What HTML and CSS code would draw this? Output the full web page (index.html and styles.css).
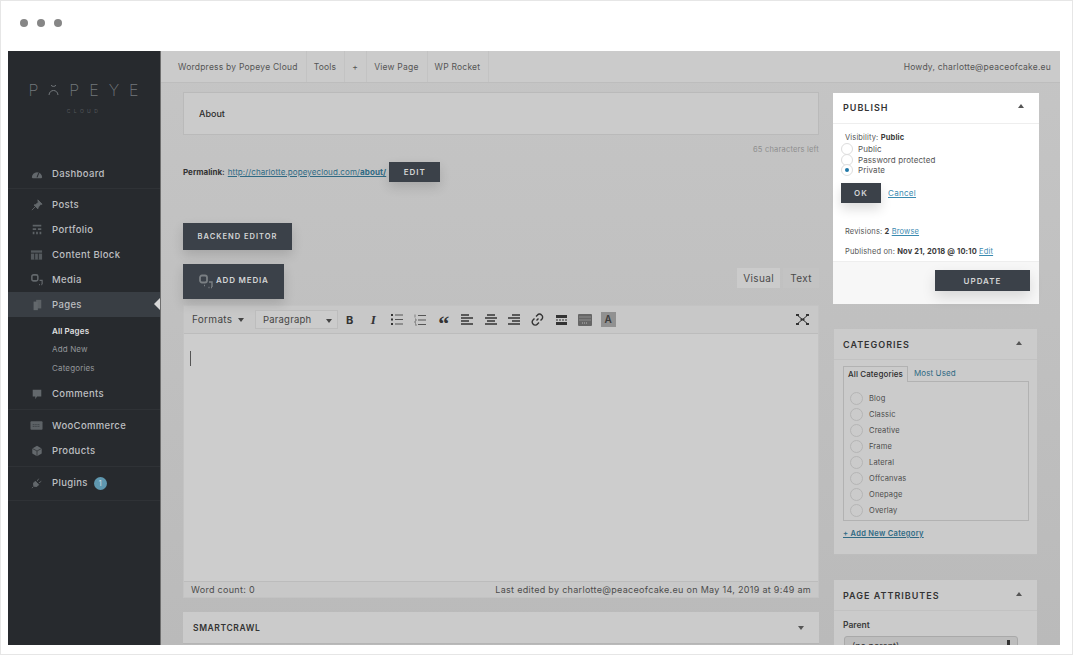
FILE: index.html
```html
<!DOCTYPE html>
<html lang="en">
<head>
    <meta charset="UTF-8">
    <meta name="viewport" content="width=device-width, initial-scale=1">
    <title>Edit Page</title>
    <link rel="stylesheet" href="styles.css">
</head>
<body>
<div class="frame">
    <div class="dots"><i></i><i></i><i></i></div>
    <div class="app">
        <aside class="sidebar">
            <div class="logo">
                <div class="logo-name">
                    <span>P</span>
                    <svg class="logo-o" width="11" height="12" viewBox="0 0 11 12"><path d="M3 1.200c1 1.600 4 1.600 5 0M1 11c.4-6 8.600-6 9 0" fill="none" stroke="#73787c" stroke-width="1"/></svg>
                    <span>P</span><span>E</span><span>Y</span><span>E</span>
                </div>
                <div class="logo-sub">CLOUD</div>
            </div>
            <nav class="menu">
                <div class="menu-group">
                    <a class="menu-item"><svg class="menu-icon" viewBox="0 0 14 14"><path d="M1 11a6 6 0 1 1 12 0l-1 1H2z" fill="#63686c"/><path d="M7 11l2-5" stroke="#272a2e" stroke-width="1.200"/></svg>Dashboard</a>
                </div>
                <div class="menu-group">
                    <a class="menu-item"><svg class="menu-icon" viewBox="0 0 14 14"><path d="M8 1l5 5-2 .5-2.500 3-.5 2L3.500 7l2-.5 3-2.500zM5 9l-4 4" fill="#63686c" stroke="#63686c"/></svg>Posts</a>
                    <a class="menu-item"><svg class="menu-icon" viewBox="0 0 14 14"><path d="M2 1h10v2H2zM2 5h4v2H2zM8 5h4v2H8zM2 9h2v3H2zM6 9h2v3H6zM10 9h2v3h-2z" fill="#5d6266"/></svg>Portfolio</a>
                    <a class="menu-item"><svg class="menu-icon menu-icon-wide" viewBox="0 0 14 12"><path d="M1 1h12v10H1z" fill="#54595d"/><path d="M1 4h12M5 4v7M9 4v7" stroke="#272a2e"/></svg>Content Block</a>
                    <a class="menu-item"><svg class="menu-icon" viewBox="0 0 14 14"><rect x="1" y="1" width="7" height="7" rx="2" fill="none" stroke="#63686c" stroke-width="1.800"/><path d="M10 7.500h3V12M9.500 12.500h1M12 12.500h1" fill="none" stroke="#63686c" stroke-width="1.400"/></svg>Media</a>
                    <a class="menu-item menu-item-active"><svg class="menu-icon" viewBox="0 0 14 14"><path d="M6 1h6v10H6z" fill="#5d6266"/><path d="M3 3h5v10H3z" fill="#63686c"/></svg>Pages</a>
                    <div class="submenu">
                        <a class="submenu-current">All Pages</a>
                        <a>Add New</a>
                        <a>Categories</a>
                    </div>
                    <a class="menu-item"><svg class="menu-icon" viewBox="0 0 14 14"><path d="M2 2h10v8H7l-2 3v-3H2z" fill="#63686c"/></svg>Comments</a>
                </div>
                <div class="menu-group">
                    <a class="menu-item"><svg class="menu-icon menu-icon-wide" viewBox="0 0 14 12"><rect x=".5" y="1" width="13" height="9" rx="1" fill="#5d6266"/><path d="M3 4.500h8M3 6.500h8" stroke="#33373b" stroke-dasharray="1 1"/></svg>WooCommerce</a>
                    <a class="menu-item"><svg class="menu-icon" viewBox="0 0 14 14"><path d="M7 1l5.500 3v6L7 13l-5.500-3V4z" fill="#63686c"/><path d="M1.500 4L7 7l5.500-3M7 7v6" stroke="#272a2e" stroke-width=".8" fill="none"/></svg>Products</a>
                </div>
                <div class="menu-group menu-group-last">
                    <a class="menu-item"><svg class="menu-icon" viewBox="0 0 14 14"><path d="M5 5l4 4-2 2H4l-1-1V7zM7 5l2-3M9 7l3-2M3 11l-2 2" fill="#63686c" stroke="#63686c"/></svg>Plugins<span class="badge">1</span></a>
                </div>
            </nav>
        </aside>
        <div class="workspace">
            <header class="topbar">
                <nav class="topbar-links">
                    <a>Wordpress by Popeye Cloud</a>
                    <a>Tools</a>
                    <a>+</a>
                    <a>View Page</a>
                    <a>WP Rocket</a>
                </nav>
                <div class="howdy">Howdy, charlotte@peaceofcake.eu</div>
            </header>
            <div class="columns">
                <main class="main">
                    <div class="title-box">About</div>
                    <div class="chars-left">65 characters left</div>
                    <div class="permalink">
                        <b>Permalink:</b>
                        <a class="link">http://charlotte.popeyecloud.com/<b>about/</b></a>
                        <button class="btn btn-edit">EDIT</button>
                    </div>
                    <button class="btn btn-backend">BACKEND EDITOR</button>
                    <div class="media-row">
                        <button class="btn btn-media">
                            <svg width="14" height="15" viewBox="0 0 14 15"><rect x="1" y="1.500" width="7" height="7" rx="2" fill="none" stroke="#7a7f83" stroke-width="1.800"/><path d="M10 8h3v5M9.500 13.500h1M12 13.500h1M5 11.500h1" fill="none" stroke="#7a7f83" stroke-width="1.400"/></svg>
                            <span class="btn-media-label">ADD MEDIA</span>
                        </button>
                        <div class="mode-tabs">
                            <span class="mode-tab mode-tab-on">Visual</span>
                            <span class="mode-tab">Text</span>
                        </div>
                    </div>
                    <section class="editor">
                        <div class="toolbar">
                            <span class="formats">Formats<i class="caret"></i></span>
                            <span class="para-select">Paragraph<i class="caret"></i></span>
                            <div class="tools">
                                <span class="tool tool-b">B</span>
                                <span class="tool tool-i">I</span>
                                <span class="tool"><svg width="12" height="11" viewBox="0 0 12 11"><path d="M0 1h2M0 5.500h2M0 10h2" stroke="#333" stroke-width="2"/><path d="M4 1h8M4 5.500h8M4 10h8" stroke="#555" stroke-width="1"/></svg></span>
                                <span class="tool"><svg width="12" height="12" viewBox="0 0 12 12"><path d="M1 .5v3M1 5h1v2H1v2h1M1 10h1v2" stroke="#777" stroke-width=".9" fill="none"/><path d="M4 1.500h8M4 6h8M4 10.500h8" stroke="#555" stroke-width="1"/></svg></span>
                                <span class="tool tool-quote">&#8220;</span>
                                <span class="tool"><svg width="12" height="11" viewBox="0 0 12 11"><path d="M0 1h8M0 4h12M0 7h8M0 10h12" stroke="#333" stroke-width="1.300"/></svg></span>
                                <span class="tool"><svg width="12" height="11" viewBox="0 0 12 11"><path d="M2 1h8M0 4h12M2 7h8M0 10h12" stroke="#333" stroke-width="1.300"/></svg></span>
                                <span class="tool"><svg width="12" height="11" viewBox="0 0 12 11"><path d="M4 1h8M0 4h12M4 7h8M0 10h12" stroke="#333" stroke-width="1.300"/></svg></span>
                                <span class="tool"><svg width="13" height="13" viewBox="0 0 13 13"><path d="M5.500 7.500l2-2M5 3.500l1.500-1.500a2.500 2.500 0 0 1 4 0 2.800 2.800 0 0 1 .5 4L9.500 7.500M8 9.500L6.500 11a2.800 2.800 0 0 1-4.500 0 2.800 2.800 0 0 1 0-4L3.500 5.500" fill="none" stroke="#333" stroke-width="1.400"/></svg></span>
                                <span class="tool"><svg width="11" height="10" viewBox="0 0 11 10"><path d="M0 0h11v3H0zM0 7h11v3H0z" fill="#333"/><path d="M0 5h11" stroke="#333" stroke-dasharray="2 1"/></svg></span>
                                <span class="tool"><svg width="14" height="12" viewBox="0 0 14 12"><rect width="14" height="12" rx="1" fill="#666"/><path d="M1.500 3h11M1.500 6h11M4 9h6" stroke="#b5b5b5" stroke-dasharray="1 1"/></svg></span>
                                <span class="tool"><span class="tool-a">A</span></span>
                            </div>
                            <svg class="tool-full" width="13" height="11" viewBox="0 0 13 11"><path d="M1 1l11 9M12 1L1 10" stroke="#333"/><path d="M0 0h3v2H0zM10 0h3v2h-3zM0 9h3v2H0zM10 9h3v2h-3zM4.500 4.500h4v2h-4z" fill="#333"/></svg>
                        </div>
                        <div class="editor-body"><i class="cursor"></i></div>
                        <div class="statusbar">
                            <span>Word count: 0</span>
                            <span>Last edited by charlotte@peaceofcake.eu on May 14, 2019 at 9:49 am</span>
                        </div>
                    </section>
                    <section class="panel panel-wide">
                        <h2>SMARTCRAWL</h2>
                        <i class="arrow-down"></i>
                    </section>
                </main>
                <aside class="side">
                    <section class="box box-publish">
                        <div class="box-head">
                            <h2>PUBLISH</h2>
                            <i class="arrow-up"></i>
                        </div>
                        <div class="publish-body">
                            <div class="visibility">Visibility: <b>Public</b></div>
                            <label class="radio"><i></i>Public</label>
                            <label class="radio"><i></i>Password protected</label>
                            <label class="radio radio-on"><i></i>Private</label>
                            <div class="ok-row">
                                <button class="btn btn-ok">OK</button>
                                <a class="link">Cancel</a>
                            </div>
                            <div class="meta meta-revisions">Revisions: <b>2</b> <a class="link">Browse</a></div>
                            <div class="meta meta-published">Published on: <b>Nov 21, 2018 @ 10:10</b> <a class="link">Edit</a></div>
                        </div>
                        <div class="publish-foot">
                            <button class="btn btn-update">UPDATE</button>
                        </div>
                    </section>
                    <section class="box box-cats">
                        <div class="box-head">
                            <h2>CATEGORIES</h2>
                            <i class="arrow-up"></i>
                        </div>
                        <div class="cats-body">
                            <div class="cat-tabs">
                                <span class="cat-tab cat-tab-on">All Categories</span>
                                <span class="cat-tab">Most Used</span>
                            </div>
                            <div class="cat-list">
                                <label class="cat"><i></i>Blog</label>
                                <label class="cat"><i></i>Classic</label>
                                <label class="cat"><i></i>Creative</label>
                                <label class="cat"><i></i>Frame</label>
                                <label class="cat"><i></i>Lateral</label>
                                <label class="cat"><i></i>Offcanvas</label>
                                <label class="cat"><i></i>Onepage</label>
                                <label class="cat"><i></i>Overlay</label>
                                <label class="cat"><i></i></label>
                            </div>
                            <a class="add-cat">+ Add New Category</a>
                        </div>
                    </section>
                    <section class="box box-attrs">
                        <div class="box-head">
                            <h2>PAGE ATTRIBUTES</h2>
                            <i class="arrow-up"></i>
                        </div>
                        <div class="attrs-body">
                            <div class="attrs-label">Parent</div>
                            <div class="attrs-select">(no parent)<i></i></div>
                        </div>
                    </section>
                </aside>
            </div>
        </div>
    </div>
</div>
</body>
</html>
```

FILE: styles.css
```css
* {
    margin: 0;
    padding: 0;
    box-sizing: border-box;
}

html,
body {
    width: 100%;
    height: 100%;
    overflow: hidden;
    background: #ffffff;
}

body {
    font-family: "Inter", "Liberation Sans", sans-serif;
    color: #333333;
}

i {
    font-style: normal;
    display: block;
}

button {
    font-family: inherit;
    border: 0;
}

.frame {
    width: 1073px;
    height: 655px;
    border: 1px solid #e6e6e6;
    background: #ffffff;
}

.dots {
    height: 50px;
    padding: 18px 0 0 19px;
    display: flex;
    gap: 9px;
}

.dots i {
    width: 8px;
    height: 8px;
    border-radius: 50%;
    background: #868686;
}

.app {
    width: 1052px;
    height: 594px;
    margin-left: 7px;
    display: flex;
    overflow: hidden;
    background: linear-gradient(#c5c5c5, #bababa);
}

/* sidebar */
.sidebar {
    width: 153px;
    flex: none;
    background: #272a2e;
    border-right: 1px solid #6e6e6e;
}

.logo {
    height: 107px;
    padding-top: 32px;
    color: #73787c;
}

.logo-name {
    display: flex;
    justify-content: center;
    align-items: center;
    gap: 10px;
    font-size: 16px;
    font-weight: 200;
    height: 14px;
    padding-right: 1px;
}

.logo-o {
    margin: 0;
}

.logo-sub {
    margin-top: 11px;
    text-align: center;
    font-size: 5px;
    letter-spacing: 3.400px;
    color: #55595d;
}

.menu-group {
    padding: 3px 0;
    border-bottom: 1px solid #2f3236;
}

.menu-group:first-child {
    padding-bottom: 2px;
}

.menu-group-last {
    padding-bottom: 5px;
}

.menu-item {
    height: 25px;
    display: flex;
    align-items: center;
    padding-left: 23px;
    font-size: 9.500px;
    font-weight: 500;
    letter-spacing: .35px;
    color: #bdbfc1;
    position: relative;
}

.menu-icon {
    width: 12px;
    height: 12px;
    margin-right: 9px;
    flex: none;
}

.menu-icon-wide {
    width: 13px;
    margin-left: -1px;
    margin-right: 9px;
}

.menu-item-active {
    background: #393e44;
}

.menu-item-active::after {
    content: "";
    position: absolute;
    right: 0;
    top: 6px;
    border: 6px solid transparent;
    border-left: 0;
    border-right-color: #d8d8d8;
}

.submenu {
    padding: 5px 0 4px 44px;
    display: flex;
    flex-direction: column;
}

.submenu a {
    height: 18.400px;
    line-height: 18.400px;
    font-size: 8px;
    letter-spacing: .15px;
    color: #93969a;
}

.submenu .submenu-current {
    color: #e0e1e2;
    font-weight: 600;
}

.badge {
    width: 13px;
    height: 13px;
    margin: 2px 0 0 6px;
    border-radius: 50%;
    background: #5f98b0;
    color: #c7dbe3;
    font-size: 7px;
    letter-spacing: 0;
    text-align: center;
    line-height: 13px;
}

/* top bar */
.workspace {
    flex: 1;
    min-width: 0;
}

.topbar {
    height: 32px;
    display: flex;
    justify-content: space-between;
    align-items: center;
    background: #cbcbcb;
    border-bottom: 1px solid #bdbdbd;
    font-size: 8.500px;
    letter-spacing: .22px;
    color: #555555;
}

.topbar-links {
    display: flex;
    height: 100%;
}

.topbar-links a {
    display: flex;
    align-items: center;
    padding: 0 8px 0 7px;
    border-right: 1px solid #c3c3c3;
}

.topbar-links a:first-child {
    padding: 0 8px 0 17px;
}

.howdy {
    padding-right: 9px;
}

/* main column */
.columns {
    display: flex;
    padding-left: 22px;
}

.main {
    width: 636px;
    flex: none;
}

.title-box {
    height: 43px;
    margin-top: 9px;
    padding-left: 15px;
    line-height: 41px;
    background: #cbcbcb;
    border: 1px solid #bababa;
    font-size: 9px;
    font-weight: 500;
    color: #2d2d2d;
}

.chars-left {
    margin-top: 10px;
    text-align: right;
    font-size: 7.500px;
    letter-spacing: .2px;
    line-height: 10px;
    color: #8e8e8e;
}

.permalink {
    display: flex;
    align-items: center;
    height: 20px;
    margin-top: 7px;
    font-size: 8px;
    color: #333333;
}

.link {
    color: #2f6a84;
    text-decoration: underline;
}

.permalink .link {
    margin-left: 3px;
    letter-spacing: .1px;
}

.btn {
    display: block;
    background: #3b4149;
    color: #d4d5d6;
    font-weight: 600;
    letter-spacing: 1px;
    box-shadow: 0 5px 12px rgba(0, 0, 0, .14);
}

.btn-edit {
    width: 51px;
    height: 20px;
    margin-left: 3px;
    font-size: 8px;
}

.btn-backend {
    width: 109px;
    height: 27px;
    margin-top: 41px;
    font-size: 7.500px;
}

.media-row {
    display: flex;
    justify-content: space-between;
    align-items: flex-end;
    margin-top: 14px;
}

.btn-media {
    width: 101px;
    height: 35px;
    display: flex;
    align-items: center;
    gap: 3px;
    padding: 0 0 0 16px;
    font-size: 8px;
    letter-spacing: .8px;
}

.btn-media-label {
    margin-bottom: 4px;
}

.mode-tabs {
    display: flex;
    gap: 3px;
    margin-bottom: 11px;
    font-size: 10px;
    letter-spacing: .4px;
    color: #4a4a4a;
}

.mode-tab {
    height: 20px;
    padding: 0 7px;
    line-height: 20px;
    background: #c3c3c3;
}

.mode-tab-on {
    padding: 0 6px;
    background: #cbcbcb;
}

.editor {
    margin-top: 6px;
    background: #cdcdcd;
    border: 1px solid #c3c3c3;
}

.toolbar {
    height: 28px;
    display: flex;
    align-items: center;
    padding: 0 8px;
    background: #c8c8c8;
    border-bottom: 1px solid #bcbcbc;
}

.formats {
    display: flex;
    align-items: center;
    width: 63px;
    margin-top: -2px;
    font-size: 10px;
    letter-spacing: .3px;
    color: #444444;
}

.caret {
    width: 0;
    height: 0;
    margin-left: 6px;
    margin-top: 2px;
    border: 3px solid transparent;
    border-bottom: 0;
    border-top: 4px solid #444444;
}

.para-select {
    width: 83px;
    height: 19px;
    display: flex;
    align-items: center;
    justify-content: space-between;
    padding: 0 5px 0 7px;
    background: #cbcbcb;
    border: 1px solid #bdbdbd;
    font-size: 9.500px;
    letter-spacing: .2px;
    color: #444444;
}

.tools {
    display: flex;
}

.tool {
    width: 23.500px;
    height: 18px;
    display: flex;
    align-items: center;
    justify-content: center;
    color: #333333;
}

.tool-b {
    font-size: 11px;
    font-weight: 700;
}

.tool-i {
    font-family: "Liberation Serif", serif;
    font-size: 13px;
    font-weight: 700;
    font-style: italic;
}

.tool-quote {
    font-family: "Liberation Serif", serif;
    font-size: 22px;
    font-weight: 700;
    line-height: 1;
    padding-top: 8px;
}

.tool-a {
    width: 15px;
    height: 15px;
    background: #919191;
    color: #3c3c3c;
    font-size: 10px;
    font-weight: 600;
    line-height: 15px;
    text-align: center;
}

.tool-full {
    margin-left: auto;
    margin-right: 1px;
}

.editor-body {
    height: 247px;
    padding: 17px 6px;
}

.cursor {
    width: 1px;
    height: 15px;
    background: #555555;
}

.statusbar {
    height: 16px;
    display: flex;
    justify-content: space-between;
    align-items: center;
    padding: 0 7px;
    background: #c8c8c8;
    border-top: 1px solid #bcbcbc;
    font-size: 9px;
    letter-spacing: .3px;
    color: #4c4c4c;
}

.panel-wide {
    height: 31px;
    margin-top: 14px;
    display: flex;
    justify-content: space-between;
    align-items: center;
    padding: 0 15px 0 10px;
    background: #cbcbcb;
    box-shadow: 0 1px 0 #b5b5b5;
}

.panel-wide h2 {
    font-size: 8.500px;
    font-weight: 600;
    letter-spacing: .6px;
    color: #333333;
}

.arrow-down,
.arrow-up {
    width: 0;
    height: 0;
    border: 3px solid transparent;
    border-left-width: 3.500px;
    border-right-width: 3.500px;
}

.arrow-down {
    border-bottom: 0;
    border-top: 4px solid #555555;
}

.arrow-up {
    border-top: 0;
    border-bottom: 4px solid #555555;
    margin-top: -2px;
}

/* right column */
.side {
    width: 206px;
    margin-left: 14px;
    flex: none;
}

.box {
    background: #cbcbcb;
    box-shadow: 0 1px 0 #bdbdbd;
}

.box-head {
    height: 31px;
    display: flex;
    justify-content: space-between;
    align-items: center;
    padding: 0 15px 2px 9px;
    border-bottom: 1px solid #c2c2c2;
}

.box-head h2 {
    font-size: 9px;
    font-weight: 600;
    letter-spacing: 1px;
    color: #333333;
}

.box-publish {
    height: 211px;
    margin-top: 10px;
    background: #ffffff;
    box-shadow: none;
}

.box-publish .box-head {
    border-bottom-color: #eeeeee;
    padding-left: 10px;
}

.publish-body {
    height: 137px;
    padding: 9px 0 0 8px;
    font-size: 7.500px;
    letter-spacing: .15px;
    color: #555555;
}

.visibility {
    padding-left: 4px;
    line-height: 10px;
    margin-bottom: 1px;
}

.visibility b,
.meta b {
    color: #3a3a3a;
}

.radio {
    height: 10.500px;
    display: flex;
    align-items: center;
    gap: 5px;
    font-size: 8px;
    letter-spacing: .1px;
}

.radio i {
    width: 12px;
    height: 12px;
    flex: none;
    border-radius: 50%;
    border: 1px solid #dddddd;
    background: #ffffff;
    position: relative;
}

.radio-on i::after {
    content: "";
    position: absolute;
    left: 3px;
    top: 3px;
    width: 4px;
    height: 4px;
    border-radius: 50%;
    background: #1e78a8;
}

.ok-row {
    display: flex;
    align-items: center;
    gap: 7px;
    margin-top: 7px;
    font-size: 8px;
}

.btn-ok {
    width: 40px;
    height: 20px;
    font-size: 8px;
    box-shadow: 0 6px 12px rgba(0, 0, 0, .14);
}

.ok-row .link {
    color: #3a8ab0;
    letter-spacing: .3px;
}

.meta {
    padding-left: 4px;
    line-height: 10px;
    white-space: nowrap;
}

.meta .link {
    color: #3a8ab0;
}

.meta-revisions {
    margin-top: 24px;
}

.meta-published {
    margin-top: 10px;
}

.publish-foot {
    height: 43px;
    padding: 8px 9px 0 0;
    display: flex;
    justify-content: flex-end;
    align-items: flex-start;
    background: #f7f7f7;
    border-top: 1px solid #eeeeee;
}

.btn-update {
    width: 95px;
    height: 21px;
    font-size: 8px;
    box-shadow: 0 6px 14px rgba(0, 0, 0, .13);
}

.box-cats {
    height: 225px;
    width: 203px;
    margin: 25px 0 0 1px;
}

.box-cats .box-head,
.box-attrs .box-head {
    padding-bottom: 0;
}

.cats-body {
    padding: 6px 8px 0 9px;
}

.cat-tabs {
    display: flex;
    height: 16px;
    font-size: 8px;
    letter-spacing: .1px;
    position: relative;
    z-index: 1;
}

.cat-tab {
    padding: 0 6px 0 4px;
    line-height: 15px;
    color: #2f6a84;
}

.cat-tab + .cat-tab {
    padding-left: 6px;
}

.cat-tab-on {
    padding-right: 4px;
    color: #2d2d2d;
    font-weight: 500;
    border: 1px solid #b2b2b2;
    border-bottom: 0;
    background: #cbcbcb;
}

.cat-list {
    height: 140px;
    margin-top: -1px;
    padding-top: 8px;
    overflow: hidden;
    border: 1px solid #b2b2b2;
}

.cat {
    height: 16px;
    display: flex;
    align-items: center;
    gap: 6px;
    padding-left: 6px;
    font-size: 7.500px;
    letter-spacing: .15px;
    color: #4c4c4c;
}

.cat i {
    width: 13px;
    height: 13px;
    border-radius: 50%;
    border: 1px solid #b5b5b5;
    flex: none;
}

.add-cat {
    display: block;
    margin-top: 8px;
    font-size: 7.500px;
    font-weight: 600;
    letter-spacing: .3px;
    color: #2f6a84;
    text-decoration: underline;
}

.box-attrs {
    width: 203px;
    height: 70px;
    margin: 26px 0 0 1px;
}

.attrs-body {
    padding: 8px 9px;
}

.attrs-label {
    font-size: 8.500px;
    font-weight: 600;
    color: #3a3a3a;
    line-height: 12px;
}

.attrs-select {
    width: 174px;
    height: 18px;
    margin: 5px 0 0 1px;
    padding: 3px 7px;
    display: flex;
    justify-content: space-between;
    border-radius: 3px;
    background: #bdbdbd;
    border: 1px solid #a9a9a9;
    font-size: 9px;
    color: #333333;
}

.attrs-select i {
    width: 3px;
    height: 8px;
    background: #333333;
}
```
